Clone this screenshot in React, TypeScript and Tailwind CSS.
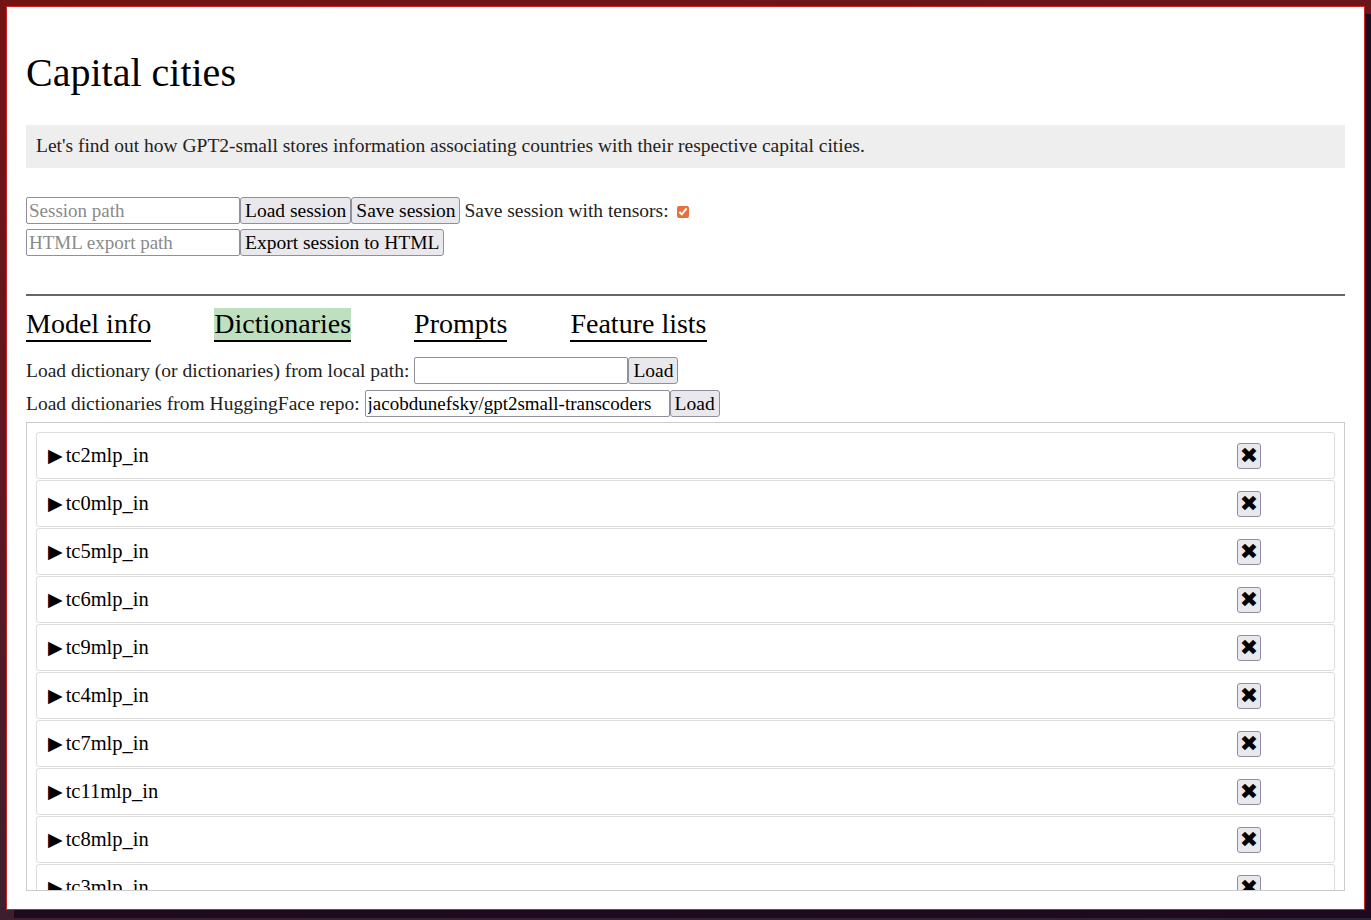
import React from 'react';

const serif = { fontFamily: '"Liberation Serif", "DejaVu Serif", serif' };

const dictionaries = [
  'tc2mlp_in',
  'tc0mlp_in',
  'tc5mlp_in',
  'tc6mlp_in',
  'tc9mlp_in',
  'tc4mlp_in',
  'tc7mlp_in',
  'tc11mlp_in',
  'tc8mlp_in',
  'tc3mlp_in',
  'tc1mlp_in',
  'tc10mlp_in',
];

const btn =
  'h-[27px] px-[4px] bg-[#e9e9ed] border border-[#8f8f9d] rounded-[3px] text-[19.5px] leading-none text-black';
const inp =
  'h-[27px] px-[2px] border border-[#8f8f9d] rounded-[2px] text-[19px] text-black placeholder:text-[#8a8a8a] bg-white outline-none';

export default function App() {
  const tabs = ['Model info', 'Dictionaries', 'Prompts', 'Feature lists'];

  return (
    <div
      className="h-[920px] w-full overflow-hidden bg-[linear-gradient(170deg,#741515_0%,#5a1824_45%,#2a2436_100%)] pt-[6px] pl-[6px]"
      style={serif}
    >
      <div className="flex h-[904px] w-[1359px] flex-col border border-[#c82424] bg-white px-[19px] pb-[18px] shadow-[8px_8px_0_#1e0a1e]">
        <h1 className="mt-[42px] text-[40px] leading-[48px] text-black">Capital cities</h1>

        <div className="mt-[28px] bg-[#eeeeee] px-[10px] pt-[9px] pb-[11px] text-[19.5px] leading-[23px] text-[#222]">
          Let's find out how GPT2-small stores information associating countries with their respective capital cities.
        </div>

        {/* session controls */}
        <div className="mt-[29px] flex flex-col gap-[5px] leading-[27px]">
          <div className="flex h-[27px] items-center">
            <input className={`${inp} w-[214px]`} placeholder="Session path" />
            <button className={btn}>Load session</button>
            <button className={btn}>Save session</button>
            <span className="ml-[4px] text-[19.5px] text-[#222]">Save session with tensors:</span>
            <input
              type="checkbox"
              defaultChecked
              className="ml-[8px] mt-[2px] h-[12px] w-[12px] accent-[#e8703a]"
            />
          </div>
          <div className="flex h-[27px] items-center">
            <input className={`${inp} w-[214px]`} placeholder="HTML export path" />
            <button className={btn}>Export session to HTML</button>
          </div>
        </div>

        <hr className="mt-[38px] border-t-2 border-[#666]" />

        {/* tabs */}
        <div className="mt-[12px] flex gap-[63px]">
          {tabs.map((t) => (
            <span
              key={t}
              className={`border-b-2 border-black text-[28px] leading-[32px] text-black ${
                t === 'Dictionaries' ? 'bg-[#bfe0bf]' : ''
              }`}
            >
              {t}
            </span>
          ))}
        </div>

        <div className="mt-[15px] flex h-[27px] items-center text-[19.5px] leading-[27px] text-[#222]">
          <span>Load dictionary (or dictionaries) from local path:</span>
          <input className={`${inp} ml-[5px] w-[214px]`} />
          <button className={btn}>Load</button>
        </div>
        <div className="mt-[6px] flex h-[27px] items-center text-[19.5px] leading-[27px] text-[#222]">
          <span>Load dictionaries from HuggingFace repo:</span>
          <input className={`${inp} ml-[5px] w-[305px]`} defaultValue="jacobdunefsky/gpt2small-transcoders" />
          <button className={btn}>Load</button>
        </div>

        {/* dictionary list */}
        <div className="mt-[5px] min-h-0 flex-1 overflow-hidden border border-[#cccccc] px-[9px] pt-[9px]">
          <div className="flex flex-col gap-[1px]">
            {dictionaries.map((d) => (
              <div
                key={d}
                className="flex h-[47px] shrink-0 items-center justify-between rounded-[3px] border border-[#dddddd] pl-[11px] pr-[73px]"
              >
                <span className="flex items-center text-[20.5px] text-black">
                  <span className="mr-[3px] text-[19px] leading-none">▶</span>
                  {d}
                </span>
                <button
                  className="flex h-[26px] w-[24px] items-center justify-center rounded-[3px] border border-[#8f8f9d] bg-[#e9e9ed] text-[22px] leading-none text-black"
                  style={{ fontFamily: '"DejaVu Sans", sans-serif' }}
                >
                  ✖
                </button>
              </div>
            ))}
          </div>
        </div>
      </div>
    </div>
  );
}
